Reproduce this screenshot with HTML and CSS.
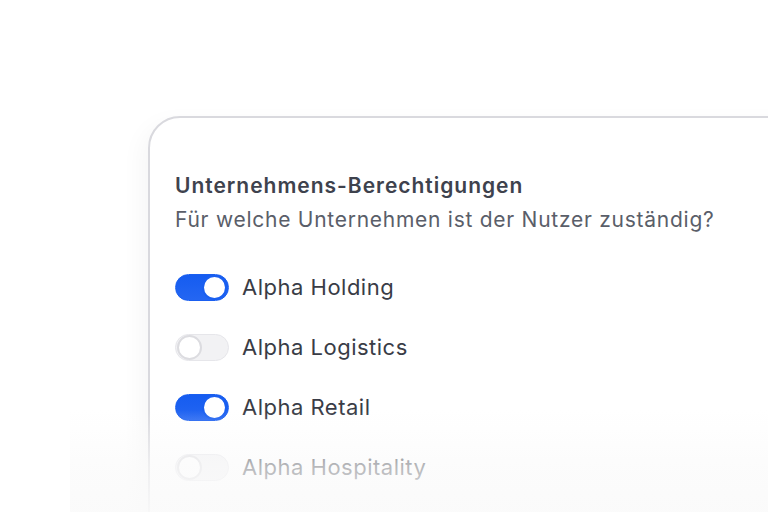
FILE: index.html
```html
<!DOCTYPE html>
<html lang="de">
<head>
<meta charset="utf-8">
<link rel="stylesheet" href="styles.css">
</head>
<body>
<div class="stage">
  <section class="card">
    <h2 class="title">Unternehmens-Berechtigungen</h2>
    <p class="subtitle">Für welche Unternehmen ist der Nutzer zuständig?</p>
    <ul class="list">
      <li class="row"><span class="toggle on"><span class="knob"></span></span><span class="label">Alpha Holding</span></li>
      <li class="row"><span class="toggle"><span class="knob"></span></span><span class="label">Alpha Logistics</span></li>
      <li class="row"><span class="toggle on"><span class="knob"></span></span><span class="label">Alpha Retail</span></li>
      <li class="row"><span class="toggle"><span class="knob"></span></span><span class="label">Alpha Hospitality</span></li>
    </ul>
  </section>
  <div class="fade"></div>
</div>
</body>
</html>
```
FILE: styles.css
```css
* { box-sizing: border-box; }
html, body { margin: 0; padding: 0; background: #fff; }
body { font-family: Inter, "Noto Sans", sans-serif; color: #3f3f46; }
.stage { position: relative; width: 768px; height: 512px; overflow: hidden; padding: 116px 0 0 148px; }
.card {
  width: 700px;
  height: 500px;
  background: #fff;
  border: 2px solid #d9d9de;
  border-radius: 32px 0 0 0;
  padding: 55px 25px 0;
  box-shadow: -6px 8px 24px rgba(0,0,0,0.04);
}
.title { margin: 0; font-size: 21px; line-height: 26px; font-weight: 600; color: #3e424d; letter-spacing: 0.98px; }
.subtitle { margin: 7px 0 0; font-size: 21px; line-height: 28px; font-weight: 400; color: #5a5e69; letter-spacing: 0.74px; }
.list { list-style: none; margin: 23px 0 0; padding: 0; }
.row { display: flex; align-items: center; gap: 13px; height: 60px; }
.toggle {
  width: 54px; height: 27px; border-radius: 14px;
  background: #f2f2f4; border: 1px solid #e6e6ea;
  display: flex; align-items: center; padding: 1px;
  flex: none;
}
.knob { width: 25px; height: 25px; border-radius: 50%; background: #fff; border: 2px solid #dcdce0; }
.toggle.on { background: linear-gradient(to bottom, #155cf0, #2466f2); border-color: #1a5ff0; justify-content: flex-end; }
.toggle.on .knob { border-color: #1a5ff0; }
.label { font-size: 22px; line-height: 28px; color: #393c46; letter-spacing: 0.5px; }
.fade {
  position: absolute; left: 70px; right: 0; top: 410px; bottom: 0;
  background: linear-gradient(to bottom, rgba(250,250,250,0) 0%, rgba(250,250,250,0.65) 55%, rgba(250,250,250,0.9) 100%);
}
```
